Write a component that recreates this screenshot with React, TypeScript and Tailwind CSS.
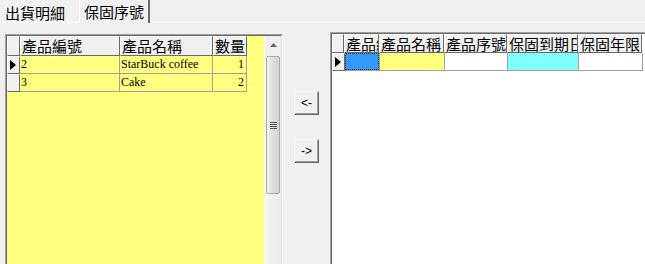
import React from 'react'

const cjk = "font-['Noto_Sans_CJK_TC',sans-serif]"

const leftCols = [
  { title: '產品編號', w: 'w-[100px]' },
  { title: '產品名稱', w: 'w-[93px]' },
  { title: '數量', w: 'w-[34px]' },
]

const leftRows = [
  { id: '2', name: 'StarBuck coffee', qty: '1' },
  { id: '3', name: 'Cake', qty: '2' },
]

const rightCols = [
  { title: '產品編號', w: 'w-[35px]', bg: 'bg-[#3399ff]' },
  { title: '產品名稱', w: 'w-[65px]', bg: 'bg-[#ffff80]' },
  { title: '產品序號', w: 'w-[63px]', bg: 'bg-white' },
  { title: '保固到期日', w: 'w-[71px]', bg: 'bg-[#80ffff]' },
  { title: '保固年限', w: 'w-[64px]', bg: 'bg-white' },
]

function HeaderCell({ w, children }: { w: string; children?: React.ReactNode }) {
  return (
    <div
      className={`${w} h-full shrink-0 overflow-hidden whitespace-nowrap bg-[#f0f0f0] border-t border-l border-white border-r border-b border-r-[#696969] border-b-[#696969] pl-[1px] text-[15px] leading-[18px] text-black ${cjk}`}
    >
      {children}
    </div>
  )
}

function RowHeader({ current, h }: { current?: boolean; h: string }) {
  return (
    <div
      className={`w-[13px] ${h} shrink-0 flex items-center bg-[#f0f0f0] border-t border-l border-white border-r border-b border-r-[#696969] border-b-[#696969]`}
    >
      {current && (
        <svg width="6" height="10" viewBox="0 0 6 10" className="ml-[2px]">
          <path d="M0 0 L6 5 L0 10 Z" fill="#000" />
        </svg>
      )}
    </div>
  )
}

function ScrollBar() {
  return (
    <div className="w-[17px] h-full shrink-0 flex flex-col bg-[#f0f0f0] border-l border-[#f7f7f7]">
      <div className="h-[17px] flex items-center justify-center">
        <svg width="7" height="4" viewBox="0 0 7 4">
          <path d="M0 4 L3.5 0 L7 4 Z" fill="#606060" />
        </svg>
      </div>
      <div className="h-[3px]" />
      <div className="mx-[1px] h-[138px] rounded-[2px] border border-[#a8a8a8] bg-gradient-to-r from-[#f2f2f2] via-[#dcdcdc] to-[#d4d4d4] flex items-center justify-center">
        <div className="flex flex-col gap-[1px]">
          <div className="w-[7px] h-[1px] bg-[#555]" />
          <div className="w-[7px] h-[1px] bg-[#555]" />
          <div className="w-[7px] h-[1px] bg-[#555]" />
          <div className="w-[7px] h-[1px] bg-[#555]" />
        </div>
      </div>
      <div className="flex-1 bg-gradient-to-r from-[#f4f4f4] to-[#ececec]" />
    </div>
  )
}

function LeftGrid() {
  return (
    <div className="mt-[2px] ml-[5px] w-[278px] h-[240px] shrink-0 border-l border-t border-[#a0a0a0] border-r border-b border-r-white border-b-white">
      <div className="h-full border-l border-t border-[#696969] border-r border-b border-r-[#e3e3e3] border-b-[#e3e3e3] flex">
        <div className="flex-1 bg-[#ffff80]">
          <div className="flex h-[20px]">
            <HeaderCell w="w-[13px]" />
            {leftCols.map((c) => (
              <HeaderCell key={c.title} w={c.w}>
                {c.title}
              </HeaderCell>
            ))}
          </div>
          {leftRows.map((r, i) => (
            <div key={r.id} className="flex h-[18px]">
              <RowHeader current={i === 0} h="h-[18px]" />
              <div className="w-[100px] border-r border-b border-[#a0a0a0] pl-[1px] text-[12px] leading-[17px] font-['Liberation_Serif',serif]">
                {r.id}
              </div>
              <div className="w-[93px] border-r border-b border-[#a0a0a0] pl-[1px] text-[12px] leading-[17px] font-['Liberation_Serif',serif] whitespace-nowrap overflow-hidden">
                {r.name}
              </div>
              <div className="w-[34px] border-r border-b border-[#a0a0a0] pr-[2px] text-right text-[12px] leading-[17px] font-['Liberation_Serif',serif]">
                {r.qty}
              </div>
            </div>
          ))}
        </div>
        <ScrollBar />
      </div>
    </div>
  )
}

function ArrowButton({ label }: { label: string }) {
  return (
    <button className="w-[25px] h-[24px] bg-[#f0f0f0] border-t border-l border-white border-r border-b border-r-[#696969] border-b-[#696969] shadow-[inset_-1px_-1px_0_#a0a0a0] text-[12px] leading-none text-black font-['Liberation_Sans',sans-serif]">
      {label}
    </button>
  )
}

function RightGrid() {
  return (
    <div className="flex-1 h-[240px] border-l border-t border-[#a0a0a0]">
      <div className="h-full border-l border-t border-[#696969] bg-white">
        <div className="flex h-[19px]">
          <HeaderCell w="w-[12px]" />
          {rightCols.map((c) => (
            <HeaderCell key={c.title} w={c.w}>
              {c.title}
            </HeaderCell>
          ))}
        </div>
        <div className="flex h-[18px]">
          <RowHeader current h="h-[18px]" />
          {rightCols.map((c, i) => (
            <div key={c.title} className={`${c.w} shrink-0 border-r border-b border-[#a0a0a0] ${c.bg}`}>
              {i === 0 && (
                <div className="h-full border border-dotted border-[#c05800] outline outline-1 -outline-offset-1 outline-dotted outline-black/60" />
              )}
            </div>
          ))}
        </div>
      </div>
    </div>
  )
}

export default function App() {
  return (
    <div className="w-[645px] h-[264px] overflow-hidden bg-[#f0f0f0]">
      <div className={`flex items-end h-[23px] ${cjk} text-[15px] text-black`}>
        <div className="h-[21px] pl-[5px] pr-[14px] leading-[21px] border-b border-white">出貨明細</div>
        <div className="h-[23px] px-[4px] leading-[23px] border-l border-white border-r-2 border-r-[#696969]">
          保固序號
        </div>
        <div className="flex-1 h-[1px] bg-white" />
      </div>
      <div className="flex items-start pt-[9px]">
        <LeftGrid />
        <div className="w-[47px] shrink-0 flex flex-col items-center pt-[59px] gap-[24px]">
          <ArrowButton label="<-" />
          <ArrowButton label="->" />
        </div>
        <RightGrid />
      </div>
    </div>
  )
}
